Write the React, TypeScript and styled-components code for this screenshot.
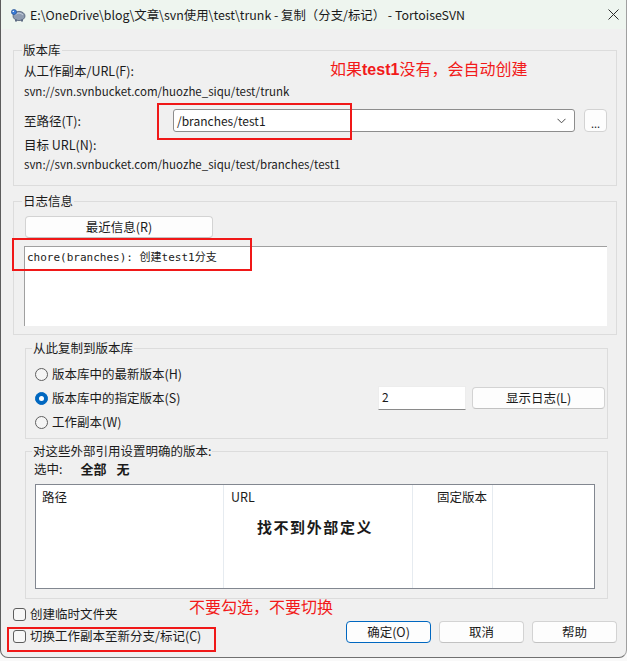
import React from "react";
import styled, { createGlobalStyle } from "styled-components";

const GlobalStyle = createGlobalStyle`
  html, body { margin: 0; padding: 0; background: #f9f9f9; }
  body {
    font-family: "Noto Sans CJK SC", "Noto Sans", sans-serif;
    font-size: 12.5px;
    color: #1b1b1b;
  }
  * { box-sizing: border-box; }
`;

const Window = styled.div`
  position: relative;
  width: 627px;
  height: 658px;
  background: #f0f0f0;
  border-left: 1px solid #5c5c5c;
  border-right: 1px solid #a0a0a0;
  border-bottom: 1px solid #707070;
  border-radius: 0 0 8px 8px;
  overflow: hidden;
  display: flex;
  flex-direction: column;
`;

const TitleBar = styled.div`
  height: 29px;
  flex: none;
  background: #eef5ef;
  display: flex;
  align-items: center;
  padding: 0 7px 0 9px;
`;

const TitleText = styled.span`
  margin-left: 4px;
  font-size: 12.4px;
  line-height: 16px;
  color: #1a1a1a;
  white-space: nowrap;
`;

const CloseBox = styled.span`
  margin-left: auto;
  display: flex;
  width: 11px;
  height: 11px;
`;

const Body = styled.div`
  display: flex;
  flex-direction: column;
  padding: 0 9px 0 12px;
`;

const Group = styled.fieldset<{ $mt: number; $inset?: boolean; $pl: number; $pr: number; $pb: number }>`
  margin: ${(p) => p.$mt}px ${(p) => (p.$inset ? 9 : 0)}px 0 ${(p) => (p.$inset ? 12 : 0)}px;
  padding: 0 ${(p) => p.$pr}px ${(p) => p.$pb}px ${(p) => p.$pl}px;
  border: 1px solid #dcdcdc;
  min-inline-size: 0;
  display: flex;
  flex-direction: column;
`;

const Legend = styled.legend`
  padding: 0 1px;
  margin-left: -2px;
  font-size: 12.5px;
  line-height: 14px;
  color: #1b1b1b;
`;

const Label = styled.div<{ $mt: number }>`
  margin-top: ${(p) => p.$mt}px;
  line-height: 16px;
  font-size: 12.5px;
  white-space: nowrap;
`;

const UrlText = styled(Label)`
  font-size: 11.5px;
`;

const PathRow = styled.div`
  margin-top: 10px;
  height: 23px;
  display: flex;
  align-items: center;
`;

const PathLabel = styled.span`
  width: 149px;
  flex: none;
  line-height: 16px;
`;

const Combo = styled.div`
  flex: 1;
  height: 23px;
  background: #ffffff;
  border: 1px solid #8d8d8d;
  border-radius: 3px;
  display: flex;
  align-items: center;
  padding: 0 8px 0 3px;
  font-size: 12px;
  line-height: 16px;
`;

const Chevron = styled.svg`
  margin-left: auto;
`;

const DotsButton = styled.button`
  margin-left: 9px;
  width: 23px;
  height: 23px;
  flex: none;
  background: #fdfdfd;
  border: 1px solid #d3d3d3;
  border-radius: 4px;
  padding: 5px 0 0 0;
  font: inherit;
  font-size: 11px;
  line-height: 12px;
  color: #1b1b1b;
`;

const PushButton = styled.button<{ $w: number; $primary?: boolean; $ml?: number }>`
  width: ${(p) => p.$w}px;
  height: 22px;
  flex: none;
  margin-left: ${(p) => p.$ml ?? 0}px;
  background: #fdfdfd;
  border: 1px solid ${(p) => (p.$primary ? "#0067c0" : "#d3d3d3")};
  border-bottom-color: ${(p) => (p.$primary ? "#0067c0" : "#c2c2c2")};
  border-radius: 4px;
  padding: 0;
  font: inherit;
  font-size: 12.5px;
  line-height: 16px;
  color: #1b1b1b;
`;

const RecentButton = styled(PushButton)`
  margin-top: 8px;
  margin-left: 1px;
`;

const LogArea = styled.div`
  margin-top: 8px;
  height: 80px;
  background: #ffffff;
  border-top: 1px solid #a0a0a0;
  border-left: 1px solid #a0a0a0;
  padding: 3px 0 0 2px;
  font-family: "DejaVu Sans Mono", "Noto Sans CJK SC", monospace;
  font-size: 11px;
  line-height: 16px;
  white-space: nowrap;
`;

const RadioList = styled.div`
  margin-top: 7px;
  display: flex;
  flex-direction: column;
`;

const RadioRow = styled.div`
  height: 24px;
  display: flex;
  align-items: center;
`;

const RadioCircle = styled.span<{ $on?: boolean }>`
  width: 13px;
  height: 13px;
  margin-left: 1px;
  border-radius: 50%;
  flex: none;
  background: ${(p) => (p.$on ? "#0067c0" : "#f5f5f5")};
  border: 1px solid ${(p) => (p.$on ? "#0067c0" : "#5f5f5f")};
  display: flex;
  align-items: center;
  justify-content: center;
  &::after {
    content: "";
    display: ${(p) => (p.$on ? "block" : "none")};
    width: 5px;
    height: 5px;
    border-radius: 50%;
    background: #ffffff;
  }
`;

const OptionText = styled.span`
  margin-left: 4px;
  line-height: 16px;
  white-space: nowrap;
`;

const RevInput = styled.div`
  margin-left: auto;
  width: 88px;
  height: 24px;
  background: #ffffff;
  border: 1px solid #ededed;
  border-bottom-color: #8a8a8a;
  padding: 2px 0 0 3px;
  font-size: 12px;
  line-height: 16px;
`;

const SelectRow = styled.div`
  margin-top: 3px;
  height: 16px;
  display: flex;
  align-items: center;
  line-height: 16px;
`;

const SelectLink = styled.span<{ $ml: number }>`
  margin-left: ${(p) => p.$ml}px;
  font-weight: 700;
  font-size: 13px;
`;

const ExtTable = styled.div`
  position: relative;
  margin: 7px 0 0 1px;
  width: 560px;
  height: 105px;
  background: #ffffff;
  border: 1px solid #828790;
  display: grid;
  grid-template-columns: 188px 189px 80px 1fr;
`;

const ColHead = styled.div<{ $right?: boolean; $last?: boolean; $pl: number }>`
  border-right: ${(p) => (p.$last ? "none" : "1px solid #e6ebf0")};
  padding: 4px 5px 0 ${(p) => p.$pl}px;
  text-align: ${(p) => (p.$right ? "right" : "left")};
  line-height: 16px;
  white-space: nowrap;
`;

const EmptyMessage = styled.div`
  position: absolute;
  left: 0;
  right: 0;
  top: 32px;
  text-align: center;
  font-size: 15px;
  font-weight: 700;
  letter-spacing: 1.6px;
  line-height: 20px;
`;

const Footer = styled.div`
  margin-top: 4px;
  display: flex;
  align-items: flex-start;
`;

const CheckList = styled.div`
  display: flex;
  flex-direction: column;
`;

const CheckRow = styled.div`
  height: 22px;
  display: flex;
  align-items: center;
`;

const CheckBox = styled.span`
  width: 13px;
  height: 13px;
  flex: none;
  border: 1px solid #5d5d5d;
  border-radius: 3px;
  background: #f7f7f7;
`;

const CheckText = styled.span`
  margin-left: 4px;
  line-height: 16px;
  white-space: nowrap;
`;

const ButtonBar = styled.div`
  margin-left: auto;
  padding-top: 18px;
  display: flex;
  gap: 8px;
`;

const RedBox = styled.div<{ $l: number; $t: number; $w: number; $h: number }>`
  position: absolute;
  left: ${(p) => p.$l}px;
  top: ${(p) => p.$t}px;
  width: ${(p) => p.$w}px;
  height: ${(p) => p.$h}px;
  border: 2px solid #f01818;
  pointer-events: none;
`;

const RedNote = styled.div<{ $l: number; $t: number }>`
  position: absolute;
  left: ${(p) => p.$l}px;
  top: ${(p) => p.$t}px;
  color: #f21a1a;
  font-size: 16px;
  line-height: 20px;
  white-space: nowrap;
  & b {
    font-family: "Liberation Sans", "Noto Sans", sans-serif;
    font-weight: 700;
  }
`;

const TurtleIcon = () => (
  <svg width="16" height="14" viewBox="0 0 16 14">
    <ellipse cx="9" cy="8" rx="6" ry="4.6" fill="#8e9bb0" stroke="#4d5a72" strokeWidth="0.8" />
    <path d="M5 7 Q9 3 13 7" fill="none" stroke="#c7d0de" strokeWidth="1" />
    <circle cx="4" cy="4" r="2.6" fill="#3b7bd6" stroke="#234d8c" strokeWidth="0.6" />
    <circle cx="3.3" cy="3.4" r="0.7" fill="#ffffff" />
    <rect x="5" y="11.5" width="2" height="2" fill="#5d6b82" />
    <rect x="11" y="11.5" width="2" height="2" fill="#5d6b82" />
  </svg>
);

export default function App() {
  return (
    <>
      <GlobalStyle />
      <Window>
        <TitleBar>
          <TurtleIcon />
          <TitleText>E:\OneDrive\blog\文章\svn使用\test\trunk - 复制（分支/标记） - TortoiseSVN</TitleText>
          <CloseBox>
            <svg width="11" height="11" viewBox="0 0 11 11">
              <path d="M0.5 0.5 L10.5 10.5 M10.5 0.5 L0.5 10.5" stroke="#2b2b2b" strokeWidth="1" />
            </svg>
          </CloseBox>
        </TitleBar>
        <Body>
          <Group $mt={14} $pl={10} $pr={9} $pb={13}>
            <Legend>版本库</Legend>
            <Label $mt={6}>从工作副本/URL(F):</Label>
            <UrlText $mt={4}>svn://svn.svnbucket.com/huozhe_siqu/test/trunk</UrlText>
            <PathRow>
              <PathLabel>至路径(T):</PathLabel>
              <Combo>
                /branches/test1
                <Chevron width="9" height="6" viewBox="0 0 9 6">
                  <path d="M0.5 0.8 L4.5 4.8 L8.5 0.8" fill="none" stroke="#4a4a4a" strokeWidth="1" />
                </Chevron>
              </Combo>
              <DotsButton>...</DotsButton>
            </PathRow>
            <Label $mt={5}>目标 URL(N):</Label>
            <UrlText $mt={3}>svn://svn.svnbucket.com/huozhe_siqu/test/branches/test1</UrlText>
          </Group>

          <Group $mt={8} $pl={10} $pr={9} $pb={8}>
            <Legend>日志信息</Legend>
            <RecentButton $w={188}>最近信息(R)</RecentButton>
            <LogArea>chore(branches): 创建test1分支</LogArea>
          </Group>

          <Group $mt={6} $inset $pl={8} $pr={2} $pb={4}>
            <Legend>从此复制到版本库</Legend>
            <RadioList>
              <RadioRow>
                <RadioCircle />
                <OptionText>版本库中的最新版本(H)</OptionText>
              </RadioRow>
              <RadioRow>
                <RadioCircle $on />
                <OptionText>版本库中的指定版本(S)</OptionText>
                <RevInput>2</RevInput>
                <PushButton $w={133} $ml={6}>显示日志(L)</PushButton>
              </RadioRow>
              <RadioRow>
                <RadioCircle />
                <OptionText>工作副本(W)</OptionText>
              </RadioRow>
            </RadioList>
          </Group>

          <Group $mt={5} $inset $pl={8} $pr={12} $pb={9}>
            <Legend>对这些外部引用设置明确的版本:</Legend>
            <SelectRow>
              选中:
              <SelectLink $ml={18}>全部</SelectLink>
              <SelectLink $ml={10}>无</SelectLink>
            </SelectRow>
            <ExtTable>
              <ColHead $pl={6}>路径</ColHead>
              <ColHead $pl={7}>URL</ColHead>
              <ColHead $pl={2} $right>固定版本</ColHead>
              <ColHead $pl={2} $last />
              <EmptyMessage>找不到外部定义</EmptyMessage>
            </ExtTable>
          </Group>

          <Footer>
            <CheckList>
              <CheckRow>
                <CheckBox />
                <CheckText>创建临时文件夹</CheckText>
              </CheckRow>
              <CheckRow>
                <CheckBox />
                <CheckText>切换工作副本至新分支/标记(C)</CheckText>
              </CheckRow>
            </CheckList>
            <ButtonBar>
              <PushButton $w={85} $primary>确定(O)</PushButton>
              <PushButton $w={85}>取消</PushButton>
              <PushButton $w={85}>帮助</PushButton>
            </ButtonBar>
          </Footer>
        </Body>

        <RedNote $l={329} $t={58}>
          如果<b>test1</b>没有，会自动创建
        </RedNote>
        <RedBox $l={156} $t={103} $w={195} $h={37} />
        <RedBox $l={11} $t={238} $w={240} $h={33} />
        <RedNote $l={188} $t={596}>不要勾选，不要切换</RedNote>
        <RedBox $l={6} $t={627} $w={209} $h={25} />
      </Window>
    </>
  );
}
